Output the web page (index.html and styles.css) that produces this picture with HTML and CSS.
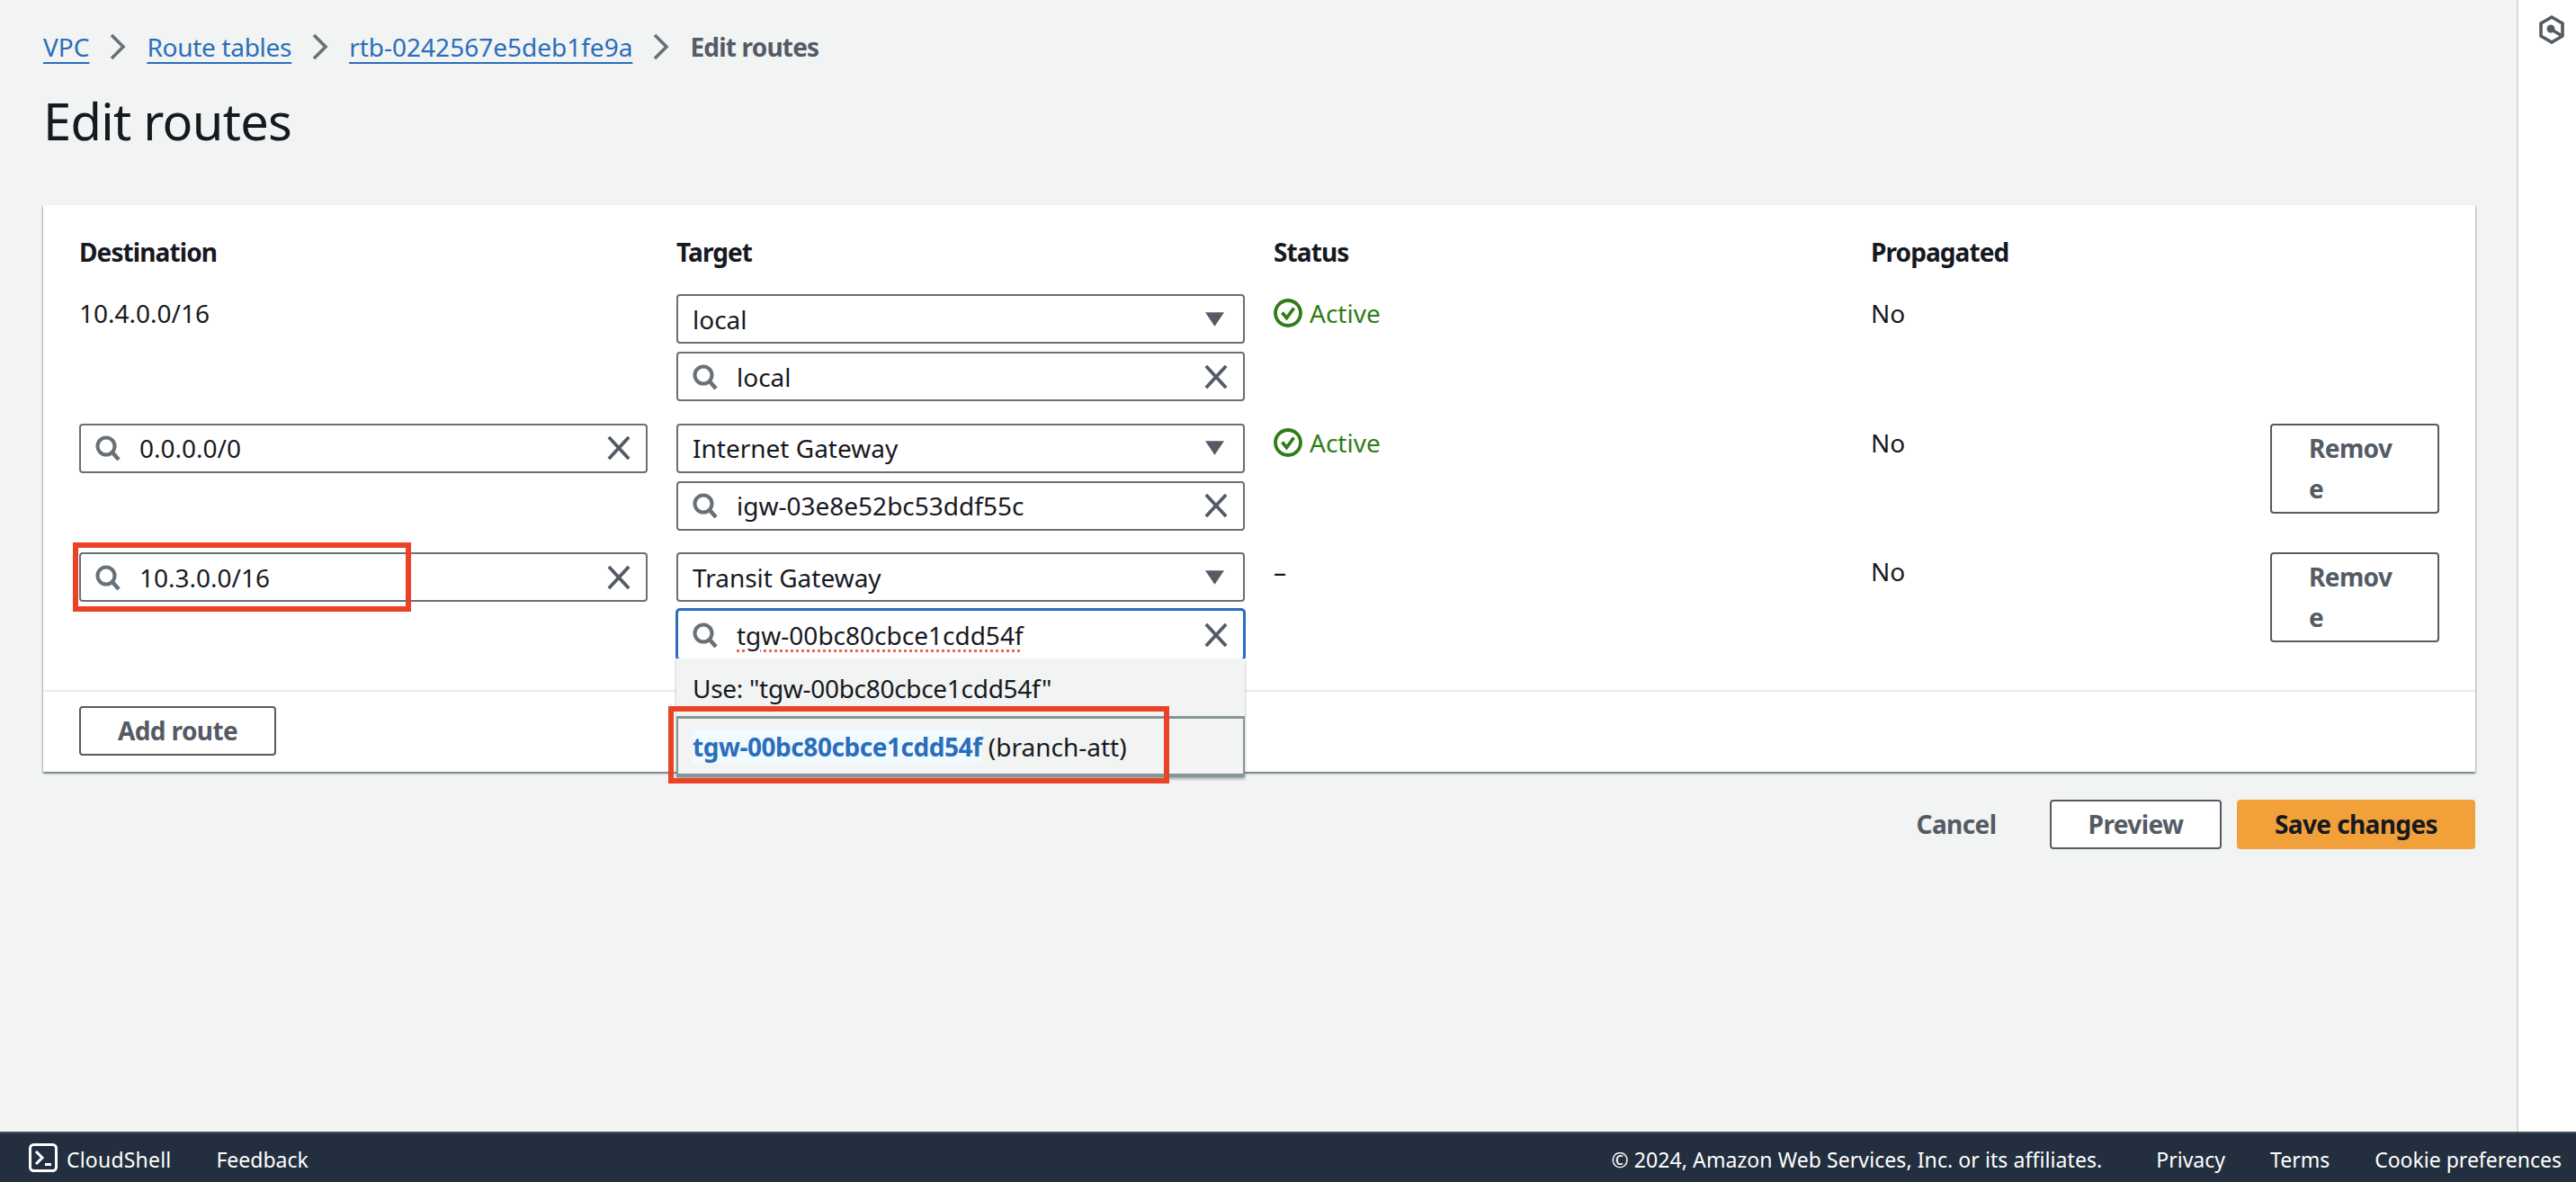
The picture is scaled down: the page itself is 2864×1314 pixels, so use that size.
FILE: index.html
```html
<!DOCTYPE html>
<html lang="en">
<head>
<meta charset="utf-8">
<title>Edit routes</title>
<link rel="stylesheet" href="styles.css">
</head>
<body>
<svg class="defs" aria-hidden="true">
  <symbol id="i-search" viewBox="0 0 28 28"><circle cx="12" cy="12" r="9.500" fill="none" stroke="currentColor" stroke-width="4"/><path d="M19 19l7 8" fill="none" stroke="currentColor" stroke-width="4.500"/></symbol>
  <symbol id="i-x" viewBox="0 0 28 28"><path d="M2 1l24 26M26 1L2 27" fill="none" stroke="currentColor" stroke-width="4"/></symbol>
  <symbol id="i-caret" viewBox="0 0 22 16"><path d="M0 0h22L11 16z" fill="currentColor"/></symbol>
  <symbol id="i-check" viewBox="0 0 32 32"><circle cx="16" cy="16" r="14" fill="none" stroke="currentColor" stroke-width="3.800"/><path d="M9.500 15.500l5 6 8-11" fill="none" stroke="currentColor" stroke-width="3.800"/></symbol>
  <symbol id="i-chev" viewBox="0 0 20 30"><path d="M3 2l13 13L3 28" fill="none" stroke="currentColor" stroke-width="3.600"/></symbol>
</svg>
<div class="app">
  <main class="main">
    <nav class="crumbs">
      <a class="crumb" href="#">VPC</a>
      <svg class="chev"><use href="#i-chev"/></svg>
      <a class="crumb crumb-tight" href="#">Route tables</a>
      <svg class="chev"><use href="#i-chev"/></svg>
      <a class="crumb" href="#">rtb-0242567e5deb1fe9a</a>
      <svg class="chev"><use href="#i-chev"/></svg>
      <span class="crumb-current">Edit routes</span>
    </nav>
    <h1 class="title">Edit routes</h1>
    <section class="card">
      <div class="card-body">
        <div class="grid head">
          <div>Destination</div><div>Target</div><div>Status</div><div>Propagated</div>
        </div>
        <div class="rows">
          <div class="grid row">
            <div class="plain">10.4.0.0/16</div>
            <div class="stack">
              <div class="field select"><span class="val">local</span><svg class="caret"><use href="#i-caret"/></svg></div>
              <div class="field search"><svg class="ico-search"><use href="#i-search"/></svg><span class="val">local</span><svg class="ico-x"><use href="#i-x"/></svg></div>
            </div>
            <div class="status ok"><svg class="ico-check"><use href="#i-check"/></svg>Active</div>
            <div class="prop"><span class="plain">No</span></div>
          </div>
          <div class="grid row">
            <div><div class="field search"><svg class="ico-search"><use href="#i-search"/></svg><span class="val">0.0.0.0/0</span><svg class="ico-x"><use href="#i-x"/></svg></div></div>
            <div class="stack">
              <div class="field select"><span class="val">Internet Gateway</span><svg class="caret"><use href="#i-caret"/></svg></div>
              <div class="field search"><svg class="ico-search"><use href="#i-search"/></svg><span class="val">igw-03e8e52bc53ddf55c</span><svg class="ico-x"><use href="#i-x"/></svg></div>
            </div>
            <div class="status ok"><svg class="ico-check"><use href="#i-check"/></svg>Active</div>
            <div class="prop"><span class="plain">No</span><button class="btn btn-remove">Remov<br>e</button></div>
          </div>
          <div class="grid row">
            <div><div class="field search"><svg class="ico-search"><use href="#i-search"/></svg><span class="val">10.3.0.0/16</span><svg class="ico-x"><use href="#i-x"/></svg><div class="mark mark-dest"></div></div></div>
            <div class="stack">
              <div class="field select"><span class="val">Transit Gateway</span><svg class="caret"><use href="#i-caret"/></svg></div>
              <div class="field search focus"><svg class="ico-search"><use href="#i-search"/></svg><span class="val squiggle">tgw-00bc80cbce1cdd54f</span><svg class="ico-x"><use href="#i-x"/></svg>
                <div class="dropdown">
                  <div class="opt-use">Use: "tgw-00bc80cbce1cdd54f"</div>
                  <div class="opt-sel"><span class="hit">tgw-00bc80cbce1cdd54f</span> (branch-att)<div class="mark mark-opt"></div></div>
                </div>
              </div>
            </div>
            <div class="status">–</div>
            <div class="prop"><span class="plain">No</span><button class="btn btn-remove">Remov<br>e</button></div>
          </div>
        </div>
      </div>
      <div class="card-foot"><button class="btn btn-add">Add route</button></div>
    </section>
    <div class="actions">
      <button class="btn btn-link">Cancel</button>
      <button class="btn btn-preview">Preview</button>
      <button class="btn btn-primary">Save changes</button>
    </div>
  </main>
  <aside class="panel">
    <svg class="hex" viewBox="0 0 30 32"><path d="M15 2l12 7v14l-12 7-12-7V9z" fill="none" stroke="currentColor" stroke-width="3.600"/><circle cx="14" cy="15" r="4.500" fill="currentColor"/><path d="M15 16l10 6" stroke="currentColor" stroke-width="3.400"/></svg>
  </aside>
</div>
<footer class="footer">
  <svg class="shell" viewBox="0 0 32 32"><rect x="1.500" y="1.500" width="29" height="29" rx="4" fill="none" stroke="currentColor" stroke-width="3"/><path d="M8 9l7 7-7 7" fill="none" stroke="currentColor" stroke-width="3"/><path d="M18 23.500h7" stroke="currentColor" stroke-width="3"/></svg>
  <span class="foot-text foot-shell">CloudShell</span>
  <span class="foot-text foot-feedback">Feedback</span>
  <div class="foot-text foot-right">
    <span class="foot-copy">© 2024, Amazon Web Services, Inc. or its affiliates.</span>
    <span>Privacy</span>
    <span>Terms</span>
    <span>Cookie preferences</span>
  </div>
</footer>
</body>
</html>
```
FILE: styles.css
```css
* { box-sizing: border-box; }
html, body { margin: 0; height: 100%; }
body {
  display: flex;
  flex-direction: column;
  height: 100vh;
  overflow: hidden;
  background: #f2f3f3;
  color: #16191f;
  font-family: "Noto Sans", Roboto, sans-serif;
  font-size: 28px;
  line-height: 42px;
}
.defs { position: absolute; width: 0; height: 0; }
.app { flex: 1; display: flex; min-height: 0; }
.main { flex: 1; min-width: 0; padding: 31px 46px 0 48px; }
.panel {
  width: 66px;
  background: #fff;
  border-left: 2px solid #d5dbdb;
  display: flex;
  justify-content: center;
  align-items: flex-start;
  padding: 17px 0 0 10px;
}
.hex { width: 30px; height: 32px; color: #545b64; }

.crumbs { display: flex; align-items: center; height: 42px; }
.crumb { color: #2a6ebb; text-decoration: underline; text-decoration-thickness: 2px; text-underline-offset: 6px; }
.crumb-tight { letter-spacing: -.3px; }
.crumb-current { color: #545b64; font-weight: 700; letter-spacing: -.8px; }
.chev { width: 20px; height: 30px; margin: 0 22px; color: #687078; }

.title { margin: 25px 0 58px; font-size: 56px; line-height: 72px; font-weight: 400; letter-spacing: -.7px; }

.card {
  background: #fff;
  box-shadow: 0 2px 2px 0 rgba(0, 28, 36, .45), 1px 1px 2px 0 rgba(0, 28, 36, .15), -1px 1px 2px 0 rgba(0, 28, 36, .15);
}
.card-body { padding: 31px 40px 33px; }
.grid { display: grid; grid-template-columns: repeat(4, 632px); column-gap: 32px; }
.head { font-weight: 700; letter-spacing: -.9px; margin-bottom: 26px; }
.rows { display: flex; flex-direction: column; gap: 24.5px; }
.row { min-height: 119px; }
.stack { display: flex; flex-direction: column; gap: 9px; }

.field {
  position: relative;
  display: flex;
  align-items: center;
  height: 55px;
  padding: 0 16px;
  background: #fff;
  border: 2px solid #687078;
  border-radius: 4px;
}
.val { flex: 1; white-space: nowrap; }
.caret { width: 21px; height: 16px; color: #545b64; margin-right: 5px; }
.ico-search { width: 28px; height: 28px; color: #687078; margin-right: 21px; flex: none; }
.ico-x { width: 28px; height: 26px; color: #545b64; flex: none; }
.focus { border-color: #2a6ebb; box-shadow: 0 0 0 1px #2a6ebb; margin-top: -1px; height: 57px; }
.squiggle { text-decoration: underline dotted #f0655a; text-decoration-thickness: 3px; text-underline-offset: 5px; }

.status { display: flex; align-items: flex-start; }
.ok { color: #2f7d17; }
.ico-check { width: 32px; height: 32px; margin: 5px 8px 0 0; flex: none; }
.prop { display: flex; justify-content: space-between; align-items: flex-start; }

.btn {
  font: inherit;
  font-weight: 700;
  letter-spacing: -.6px;
  color: #545b64;
  background: #fff;
  border: 2px solid #545b64;
  border-radius: 4px;
  line-height: 42px;
  height: 55px;
  padding: 0 0 2px;
}
.btn-remove { width: 188px; height: 100px; line-height: 45px; text-align: left; padding: 0 0 0 41px; }
.btn-add { width: 219px; }

.card-foot { border-top: 2px solid #eaeded; padding: 16px 40px 18px; display: flex; }

.actions { display: flex; justify-content: flex-end; margin-top: 31px; }
.btn-link { background: none; border-color: transparent; width: 168px; padding-right: 40px; }
.btn-preview { width: 191px; }
.btn-primary { width: 265px; margin-left: 17px; background: #f2a13a; border-color: #f2a13a; color: #16191f; }

.dropdown {
  position: absolute;
  left: -2px;
  right: -2px;
  top: 100%;
  background: #f2f3f3;
  box-shadow: 0 2px 3px rgba(0, 28, 36, .35);
  z-index: 2;
}
.opt-use { height: 64px; padding: 12px 18px 0; white-space: nowrap; letter-spacing: -.3px; }
.opt-sel {
  position: relative;
  height: 68px;
  padding: 10px 18px 0 16px;
  border: 2px solid #879596;
  border-width: 3px 2px 4px;
  white-space: nowrap;
}
.hit { color: #2a6ebb; font-weight: 700; background: #f1faff; letter-spacing: -.45px; }

.mark { position: absolute; border: 6px solid #ea4225; pointer-events: none; z-index: 3; }
.mark-dest { left: -9px; top: -13px; width: 376px; height: 77px; }
.mark-opt { left: -11px; top: -14px; width: 557px; height: 86px; }

.footer {
  height: 56px;
  flex: none;
  display: flex;
  align-items: center;
  background: #232f3e;
  border-top: 2px solid #414d5c;
  color: #fff;
  font-size: 23px;
  padding: 0 16px 0 32px;
}
.shell { width: 32px; height: 32px; margin-right: 10px; }
.foot-text { padding-top: 4px; }
.foot-shell { letter-spacing: .2px; }
.foot-feedback { margin-left: 50px; }
.foot-right { margin-left: auto; display: flex; gap: 50px; }
.foot-copy { margin-right: 10px; letter-spacing: .08px; }
```
